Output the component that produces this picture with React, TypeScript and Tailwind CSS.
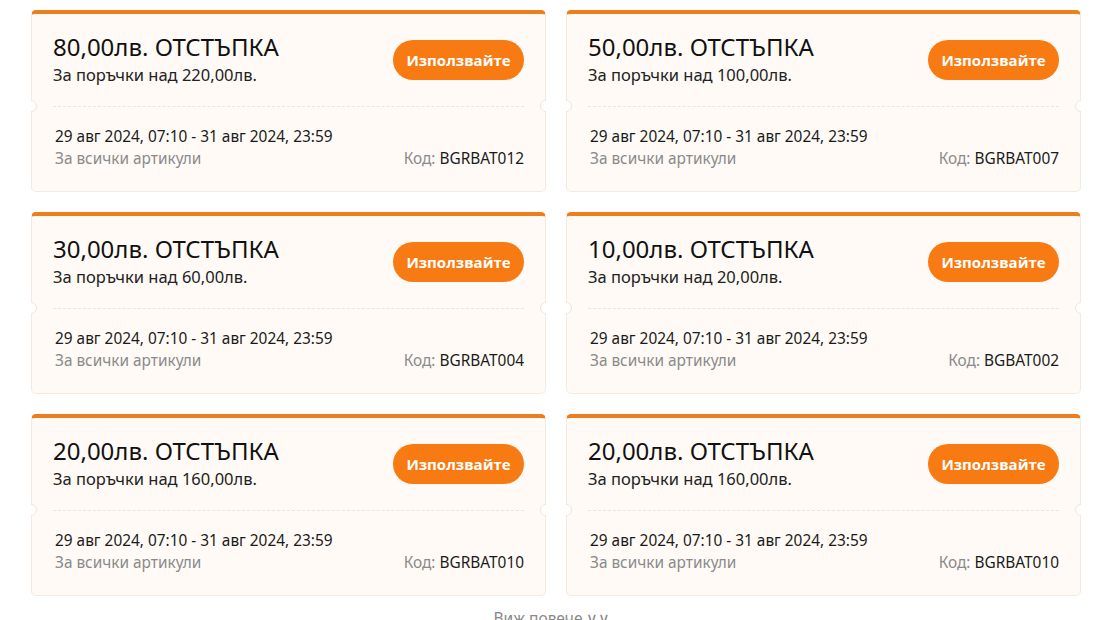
import React from "react";

type Coupon = {
  amount: string;
  min: string;
  code: string;
};

const coupons: Coupon[] = [
  { amount: "80,00лв.", min: "220,00лв.", code: "BGRBAT012" },
  { amount: "50,00лв.", min: "100,00лв.", code: "BGRBAT007" },
  { amount: "30,00лв.", min: "60,00лв.", code: "BGRBAT004" },
  { amount: "10,00лв.", min: "20,00лв.", code: "BGBAT002" },
  { amount: "20,00лв.", min: "160,00лв.", code: "BGRBAT010" },
  { amount: "20,00лв.", min: "160,00лв.", code: "BGRBAT010" },
];

function Notch({ side }: { side: "left" | "right" }) {
  return (
    <span
      className={
        side === "left"
          ? "absolute left-[-1px] top-[86px] h-[12px] w-[7px] overflow-hidden"
          : "absolute right-[-1px] top-[86px] h-[12px] w-[7px] overflow-hidden"
      }
    >
      <span
        className={
          side === "left"
            ? "absolute left-[-6px] top-0 h-[12px] w-[12px] rounded-full border border-[#efe6dc] bg-white"
            : "absolute right-[-6px] top-0 h-[12px] w-[12px] rounded-full border border-[#efe6dc] bg-white"
        }
      />
    </span>
  );
}

function CouponCard({ c }: { c: Coupon }) {
  return (
    <div className="relative h-[182px] rounded-[5px] border border-[#f3ebe2] border-t-4 border-t-[#ee7d1c] bg-[#fffaf6]">
      <div className="flex h-[92px] items-center justify-between px-[21px]">
        <div className="flex flex-col">
          <div className="text-[24px] leading-[30px] text-[#111]">{c.amount} ОТСТЪПКА</div>
          <div className="text-[16.5px] leading-[26px] text-[#222]">За поръчки над {c.min}</div>
        </div>
        <button className="h-[40px] w-[131px] rounded-full bg-[#f77a12] pt-[1px] text-[15px] font-bold text-white [font-family:'Open_Sans',sans-serif]">
          Използвайте
        </button>
      </div>
      <div className="mx-[21px] border-t border-dashed border-[#efe4d6]" />
      <div className="px-[21px] pt-[19px] text-[15.4px] leading-[22px]">
        <div className="pl-[2px] text-[#1a1a1a]">29 авг 2024, 07:10 - 31 авг 2024, 23:59</div>
        <div className="flex justify-between">
          <span className="pl-[2px] text-[#8a8a8a]">За всички артикули</span>
          <span>
            <span className="text-[#8a8a8a]">Код: </span>
            <span className="text-[#1a1a1a]">{c.code}</span>
          </span>
        </div>
      </div>
      <Notch side="left" />
      <Notch side="right" />
    </div>
  );
}

export default function App() {
  return (
    <div className="h-[620px] w-[1096px] overflow-hidden bg-white [font-family:'Noto_Sans',sans-serif]">
      <div className="ml-[31px] grid w-[1050px] grid-cols-2 gap-[20px] pt-[10px]">
        {coupons.map((c, i) => (
          <CouponCard key={i} c={c} />
        ))}
      </div>
      <div className="mt-[12px] pl-[8px] text-center text-[15.5px] leading-[20px] text-[#888]">Виж повече ∨∨</div>
    </div>
  );
}
